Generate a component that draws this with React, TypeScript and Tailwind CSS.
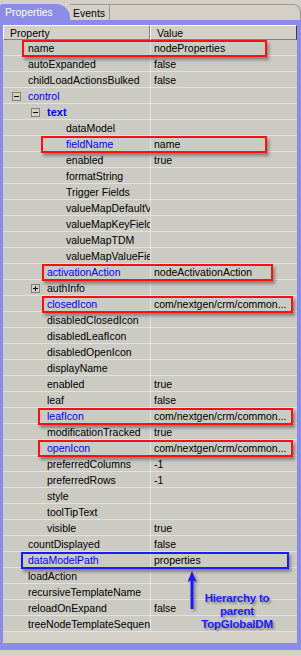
import React from 'react';

// Property grid screenshot: tree rows with a few highlighted entries.

type Mark = 'red' | 'blue';

interface Row {
  label: string;
  value?: string;
  level: number;
  blue?: boolean;
  bold?: boolean;
  toggle?: '-' | '+';
  mark?: Mark;
  markLeft?: number;
  markWidth?: number;
}

const PATH = 'com/nextgen/crm/common...';

const ROWS: Row[] = [
  { label: 'name', value: 'nodeProperties', level: 0, mark: 'red', markLeft: 19, markWidth: 245 },
  { label: 'autoExpanded', value: 'false', level: 0 },
  { label: 'childLoadActionsBulked', value: 'false', level: 0 },
  { label: 'control', level: 0, blue: true, toggle: '-' },
  { label: 'text', level: 1, blue: true, bold: true, toggle: '-' },
  { label: 'dataModel', level: 2 },
  { label: 'fieldName', value: 'name', level: 2, blue: true, mark: 'red', markLeft: 38, markWidth: 226 },
  { label: 'enabled', value: 'true', level: 2 },
  { label: 'formatString', level: 2 },
  { label: 'Trigger Fields', level: 2 },
  { label: 'valueMapDefaultValue', level: 2 },
  { label: 'valueMapKeyField', level: 2 },
  { label: 'valueMapTDM', level: 2 },
  { label: 'valueMapValueField', level: 2 },
  { label: 'activationAction', value: 'nodeActivationAction', level: 1, blue: true, mark: 'red', markLeft: 39, markWidth: 231 },
  { label: 'authInfo', level: 1, toggle: '+' },
  { label: 'closedIcon', value: PATH, level: 1, blue: true, mark: 'red', markLeft: 39, markWidth: 251 },
  { label: 'disabledClosedIcon', level: 1 },
  { label: 'disabledLeafIcon', level: 1 },
  { label: 'disabledOpenIcon', level: 1 },
  { label: 'displayName', level: 1 },
  { label: 'enabled', value: 'true', level: 1 },
  { label: 'leaf', value: 'false', level: 1 },
  { label: 'leafIcon', value: PATH, level: 1, blue: true, mark: 'red', markLeft: 35, markWidth: 255 },
  { label: 'modificationTracked', value: 'true', level: 1 },
  { label: 'openIcon', value: PATH, level: 1, blue: true, mark: 'red', markLeft: 35, markWidth: 255 },
  { label: 'preferredColumns', value: '-1', level: 1 },
  { label: 'preferredRows', value: '-1', level: 1 },
  { label: 'style', level: 1 },
  { label: 'toolTipText', level: 1 },
  { label: 'visible', value: 'true', level: 1 },
  { label: 'countDisplayed', value: 'false', level: 0 },
  { label: 'dataModelPath', value: 'properties', level: 0, blue: true, mark: 'blue', markLeft: 18, markWidth: 268 },
  { label: 'loadAction', level: 0 },
  { label: 'recursiveTemplateName', level: 0 },
  { label: 'reloadOnExpand', value: 'false', level: 0 },
  { label: 'treeNodeTemplateSequence', level: 0 },
];

function Toggle({ sign, level }: { sign: '-' | '+'; level: number }) {
  return (
    <span
      className="absolute top-[4px] w-[9px] h-[9px] border border-[#808080] bg-[#d4d0c8] flex items-center justify-center"
      style={{ left: 9 + 19 * level }}
    >
      <span className="absolute w-[5px] h-px bg-black" />
      {sign === '+' && <span className="absolute w-px h-[5px] bg-black" />}
    </span>
  );
}

export default function App() {
  return (
    <div className="relative w-[301px] h-[656px] overflow-hidden bg-[#d4d0c8] font-['Liberation_Sans',Arial,sans-serif] text-[10.5px] text-black">
      {/* Tab strip */}
      <div className="flex items-end h-[20px]">
        <div className="h-[16px] w-[70px] bg-[#8b8be8] rounded-tl-[3px] rounded-tr-[14px] text-white pl-[5px] leading-[17px] text-[10.5px]">
          Properties
        </div>
        <div className="h-[16px] w-[40px] border-t border-r border-[#9a9a9a] pl-[3px] leading-[16px]">Events</div>
        <div className="flex-1 h-[16px] border-t border-r border-[#9a9a9a] rounded-tr-[8px]" />
      </div>

      {/* Frame */}
      <div className="h-[630px] bg-[#8b8be8] pl-[3px] pr-[4px] pt-[5px] pb-[7px]">
        <div className="h-full bg-[#d4d0c8] flex flex-col">
          {/* Header */}
          <div className="flex h-[15px] shrink-0">
            <div className="w-[147px] border-t border-l border-white border-r border-b border-r-[#808080] border-b-[#808080] pl-[6px] leading-[14px]">
              Property
            </div>
            <div className="flex-1 border-t border-l border-white border-r border-b border-r-[#404040] border-b-[#808080] pl-[6px] leading-[14px]">
              Value
            </div>
          </div>

          {/* Rows */}
          <div className="flex flex-col">
            {ROWS.map((row, i) => (
              <div key={i} className="relative flex h-[16px] bg-[#cbcac3] border-b border-[#e2e1da]">
                {row.toggle && <Toggle sign={row.toggle} level={row.level} />}
                <div
                  className={`w-[147px] shrink-0 overflow-hidden whitespace-nowrap leading-[17px] ${
                    row.blue ? 'text-[#0000ff]' : 'text-black'
                  } ${row.bold ? 'font-bold text-[11px]' : ''}`}
                  style={{ paddingLeft: 25 + 19 * row.level }}
                >
                  {row.label}
                </div>
                <div className="flex-1 border-l border-[#e2e1da] pl-[3px] overflow-hidden whitespace-nowrap leading-[17px]">
                  {row.value}
                </div>
                {row.mark && (
                  <div
                    className={`absolute z-10 top-0 h-[17px] border-2 shadow-[2px_3px_3px_rgba(0,0,0,0.35)] ${
                      row.mark === 'red' ? 'border-[#ff1010]' : 'border-[#1a1aff]'
                    }`}
                    style={{ left: row.markLeft, width: row.markWidth }}
                  />
                )}
              </div>
            ))}
          </div>
        </div>
      </div>

      {/* Annotation arrow */}
      <svg className="absolute left-[186px] top-[571px] drop-shadow-[2px_2px_1.5px_rgba(0,0,0,0.35)]" width="12" height="40" viewBox="0 0 12 40">
        <path d="M6 0 L1.5 11 L4.5 9.5 L4.5 38 L7.5 38 L7.5 9.5 L10.5 11 Z" fill="#1a1aff" />
      </svg>

      {/* Annotation text */}
      <div className="absolute left-[197px] top-[592px] w-[80px] text-center font-['Liberation_Sans',Arial,sans-serif] font-bold text-[11.5px] leading-[13px] text-[#1a1aff] [text-shadow:2px_2px_2px_rgba(0,0,0,0.3)] tracking-[-0.2px]">
        Hierarchy to
        <br />
        parent
        <br />
        TopGlobalDM
      </div>
    </div>
  );
}
